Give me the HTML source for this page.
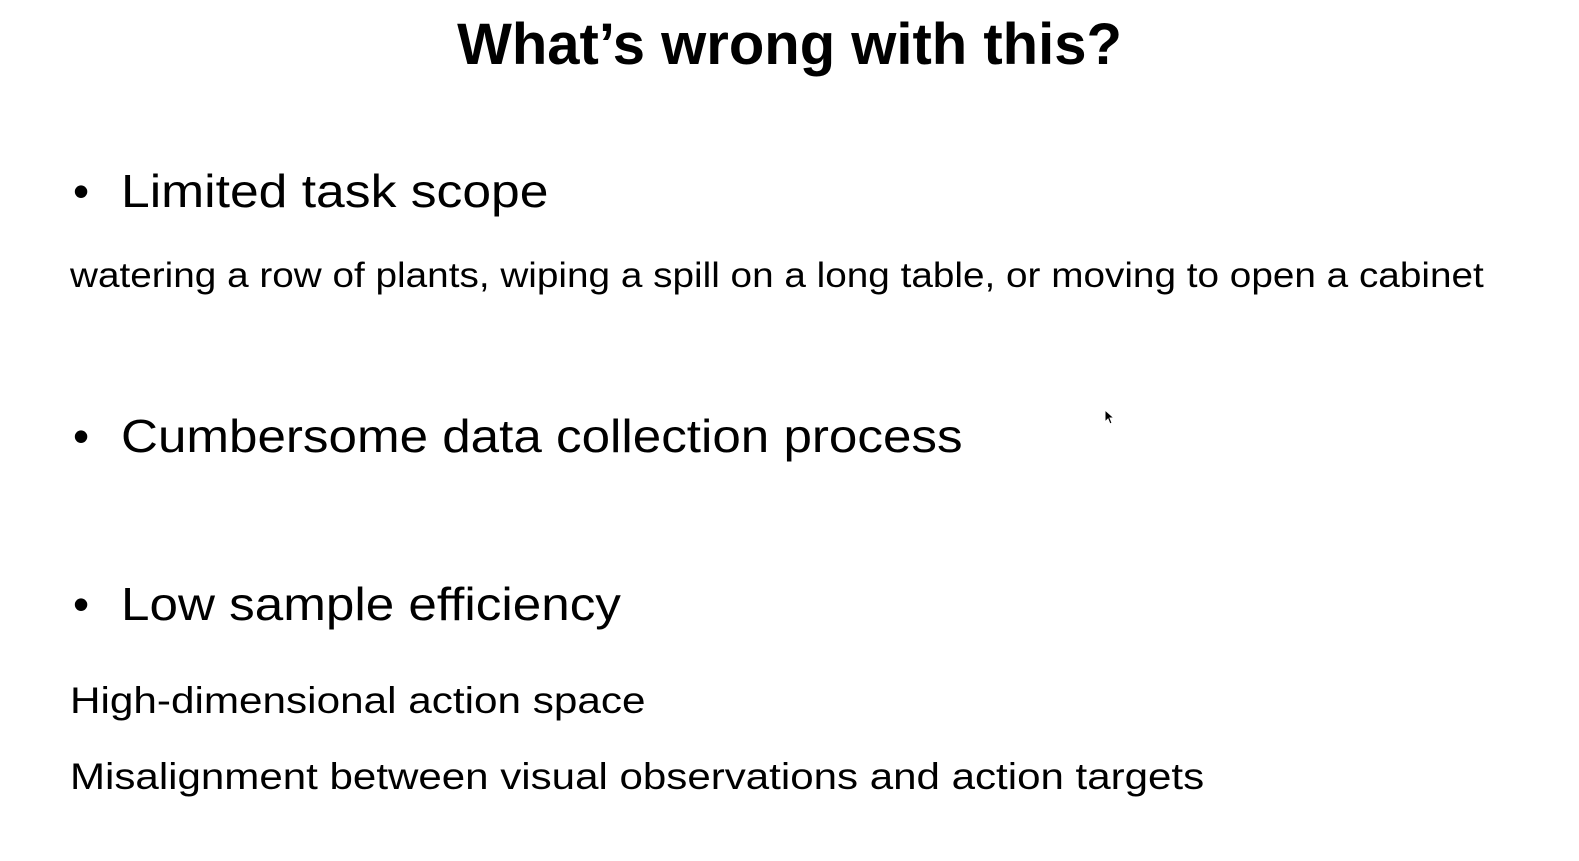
<!DOCTYPE html>
<html><head><meta charset="utf-8"><style>
html,body{margin:0;padding:0;background:#fff;width:1579px;height:861px;overflow:hidden;font-family:"Liberation Sans",sans-serif;color:#000}
.t{position:absolute;white-space:nowrap;transform-origin:0 50%}
</style></head><body>
<div class="t" style="left:0;width:1579px;text-align:center;top:12px;font-size:58px;font-weight:bold;line-height:66px">What’s wrong with this?</div>
<div class="t" style="left:73px;top:164px;font-size:46px;line-height:54px">•</div>
<div class="t" style="left:121px;top:164px;font-size:46px;line-height:54px;transform:scaleX(1.122)">Limited task scope</div>
<div class="t" style="left:70px;top:256px;font-size:35px;line-height:40px;transform:scaleX(1.106)">watering a row of plants, wiping a spill on a long table, or moving to open a cabinet</div>
<div class="t" style="left:73px;top:409px;font-size:46px;line-height:54px">•</div>
<div class="t" style="left:121px;top:409px;font-size:46px;line-height:54px;transform:scaleX(1.112)">Cumbersome data collection process</div>
<div class="t" style="left:73px;top:577px;font-size:46px;line-height:54px">•</div>
<div class="t" style="left:121px;top:577px;font-size:46px;line-height:54px;transform:scaleX(1.113)">Low sample efficiency</div>
<div class="t" style="left:70px;top:680px;font-size:37px;line-height:42px;transform:scaleX(1.142)">High-dimensional action space</div>
<div class="t" style="left:70px;top:756px;font-size:37px;line-height:42px;transform:scaleX(1.137)">Misalignment between visual observations and action targets</div>
<svg class="t" style="left:1104px;top:409px" width="12" height="18" viewBox="0 0 12 18"><path d="M1 1 L1 13 L4 10 L6 15 L8 14 L6 9 L10 9 Z" fill="#000" stroke="#fff" stroke-width="1"/></svg>
</body></html>
